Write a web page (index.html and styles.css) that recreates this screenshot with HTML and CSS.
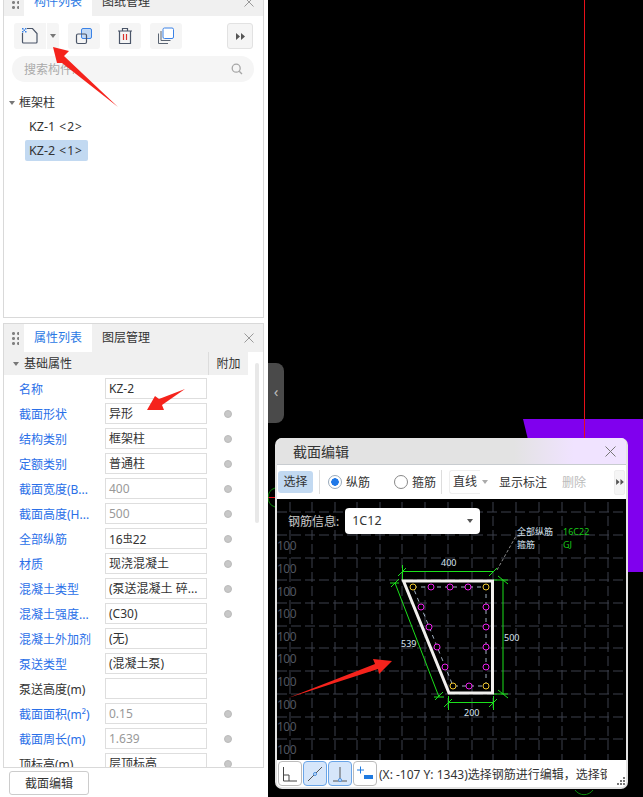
FILE: index.html
```html
<!DOCTYPE html>
<html>

<head>
    <title>截面编辑</title>
    <link rel="stylesheet" href="styles.css">
</head>

<body>
    <div class="app">
        <div class="sidebar">
            <!-- component list -->
            <div class="panel list-panel">
                <div class="tabs">
                    <span class="grip"></span>
                    <span class="tab active">构件列表</span>
                    <span class="tab">图纸管理</span>
                    <svg class="tab-close" width="10" height="10" viewBox="0 0 10 10"><path d="M0.500 0.500L9.500 9.500M9.500 0.500L0.500 9.500" stroke="#999"/></svg>
                </div>
                <div class="tools">
                    <div class="tool tool-new">
                        <svg width="18" height="18" viewBox="0 0 18 18"><path d="M1.500 6V15Q1.500 16 2.500 16H15Q16 16 16 15V6.500L11.500 1.500H6" fill="none" stroke="#4a5568" stroke-width="1.200"/><path d="M1 1h1.500v1.500H1zM4 1h1.500v1.500H4zM2.500 2.500H4V4H2.500zM1 4h1.500v1.500H1zM4 4h1.500v1.500H4z" fill="#3b82e6"/></svg>
                    </div>
                    <div class="tool-drop"><span class="caret"></span></div>
                    <div class="tool">
                        <svg width="18" height="18" viewBox="0 0 18 18"><rect x="6.500" y="1.500" width="10" height="10" rx="1.500" fill="#c2d9f5" stroke="#3b82e6"/><rect x="1.500" y="7" width="10" height="9.500" rx="1.500" fill="none" stroke="#4a5568" stroke-width="1.200"/></svg>
                    </div>
                    <div class="tool">
                        <svg width="16" height="18" viewBox="0 0 16 18"><path d="M1 4H15M5.500 4V1.500H10.500V4M2.500 4V16.500H13.500V4" fill="none" stroke="#4a5568" stroke-width="1.200"/><path d="M6.500 7V13M9.500 7V13" stroke="#d9332b" stroke-width="1.200"/></svg>
                    </div>
                    <div class="tool">
                        <svg width="18" height="18" viewBox="0 0 18 18"><rect x="6" y="1" width="10.500" height="10.500" rx="1.500" fill="#fff" stroke="#3b82e6"/><path d="M4 4V13.500H13.500M1.500 6.500V16.500H11" fill="none" stroke="#5a6472"/></svg>
                    </div>
                    <div class="tool-more">
                        <svg width="9" height="7" viewBox="0 0 9 7"><path d="M0 0L4 3.500L0 7ZM5 0L9 3.500L5 7Z" fill="#555"/></svg>
                    </div>
                </div>
                <div class="search">
                    <span>搜索构件...</span>
                    <svg width="12" height="12" viewBox="0 0 12 12"><circle cx="5.200" cy="5.200" r="4" fill="none" stroke="#a6a6a6" stroke-width="1.300"/><path d="M8.200 8.200L11 11" stroke="#a6a6a6" stroke-width="1.300"/></svg>
                </div>
                <div class="tree">
                    <div class="tree-group"><span class="caret"></span>框架柱</div>
                    <div class="tree-item">KZ-1 <small>&lt;2&gt;</small></div>
                    <div class="tree-item selected">KZ-2 <small>&lt;1&gt;</small></div>
                </div>
            </div>

            <!-- properties -->
            <div class="panel props-panel">
                <div class="tabs">
                    <span class="grip"></span>
                    <span class="tab active">属性列表</span>
                    <span class="tab">图层管理</span>
                    <svg class="tab-close" width="10" height="10" viewBox="0 0 10 10"><path d="M0.500 0.500L9.500 9.500M9.500 0.500L0.500 9.500" stroke="#999"/></svg>
                </div>
                <div class="props-wrap">
                    <div class="props">
                        <div class="props-head">
                            <div class="head-name"><span class="caret"></span>基础属性</div>
                            <div class="head-extra">附加</div>
                        </div>
                        <div class="row"><label>名称</label><div class="field">KZ-2</div><i class="no-dot"></i></div>
                        <div class="row"><label>截面形状</label><div class="field">异形</div><i class="dot"></i></div>
                        <div class="row"><label>结构类别</label><div class="field">框架柱</div><i class="dot"></i></div>
                        <div class="row"><label>定额类别</label><div class="field">普通柱</div><i class="dot"></i></div>
                        <div class="row"><label>截面宽度(B...</label><div class="field muted">400</div><i class="dot"></i></div>
                        <div class="row"><label>截面高度(H...</label><div class="field muted">500</div><i class="dot"></i></div>
                        <div class="row"><label>全部纵筋</label><div class="field">16<span class="steel">虫</span>22</div><i class="dot"></i></div>
                        <div class="row"><label>材质</label><div class="field">现浇混凝土</div><i class="dot"></i></div>
                        <div class="row"><label>混凝土类型</label><div class="field">(泵送混凝土 碎...</div><i class="dot"></i></div>
                        <div class="row"><label>混凝土强度...</label><div class="field">(C30)</div><i class="dot"></i></div>
                        <div class="row"><label>混凝土外加剂</label><div class="field">(无)</div><i class="no-dot"></i></div>
                        <div class="row"><label>泵送类型</label><div class="field">(混凝土泵)</div><i class="no-dot"></i></div>
                        <div class="row"><label class="plain">泵送高度(m)</label><div class="field"></div><i class="no-dot"></i></div>
                        <div class="row"><label>截面面积(m²)</label><div class="field muted">0.15</div><i class="dot"></i></div>
                        <div class="row"><label>截面周长(m)</label><div class="field muted">1.639</div><i class="dot"></i></div>
                        <div class="row"><label class="plain">顶标高(m)</label><div class="field">层顶标高</div><i class="dot"></i></div>
                    </div>
                    <div class="scrollbar"></div>
                </div>
            </div>
            <div class="bottom-bar"><button class="edit-btn">截面编辑</button></div>
        </div>

        <div class="canvas">
            <svg class="scene" width="375" height="797" viewBox="268 0 375 797">
                <polygon points="523,419 643,419 643,572 560,572" fill="#8000ee"/>
                <path d="M584.500 0V440M268 497.500H280" stroke="#e8101a" fill="none"/>
                <path d="M275 488A10 10 0 0 0 275 507M575 790A11 11 0 0 0 593 790" stroke="#0a8a0a" fill="none"/>
            </svg>
            <div class="side-handle"><span>&lsaquo;</span></div>

            <!-- section editor window -->
            <div class="dialog">
                <div class="dialog-title">
                    <span>截面编辑</span>
                    <svg class="dialog-close" width="11" height="11" viewBox="0 0 11 11"><path d="M0.500 0.500L10.500 10.500M10.500 0.500L0.500 10.500" stroke="#777"/></svg>
                </div>
                <div class="dialog-tools">
                    <span class="pick">选择</span>
                    <span class="sep"></span>
                    <span class="radio on"></span><span class="radio-text first">纵筋</span>
                    <span class="radio"></span><span class="radio-text">箍筋</span>
                    <span class="sep second"></span>
                    <span class="line-select">直线</span><span class="caret line-caret"></span>
                    <span class="action">显示标注</span>
                    <span class="action off">删除</span>
                    <span class="tool-more small">
                        <svg width="8" height="6" viewBox="0 0 9 7"><path d="M0 0L4 3.500L0 7ZM5 0L9 3.500L5 7Z" fill="#555"/></svg>
                    </span>
                </div>
                <div class="drawing">
                    <svg width="349" height="261" viewBox="277 499 349 261">
                        <g class="grid">
                            <path d="M290 502V760M312 502V760M335 502V760M357 502V760M380 502V760M402 502V760M425 502V760M448 502V760M472 502V760M493 502V760M516 502V760M539 502V760M562 502V760M585 502V760M608 502V760"/>
                            <path d="M277 512H626M277 535H626M277 558H626M277 580H626M277 603H626M277 626H626M277 648H626M277 671H626M277 694H626M277 717H626M277 739H626"/>
                        </g>
                        <g class="ticks">
                            <text x="277" y="550">100</text><text x="277" y="573">100</text><text x="277" y="596">100</text><text x="277" y="618">100</text><text x="277" y="641">100</text><text x="277" y="663">100</text><text x="277" y="686">100</text><text x="277" y="709">100</text><text x="277" y="731">100</text><text x="277" y="754">100</text>
                        </g>
                        <!-- dimension lines -->
                        <g class="dims">
                            <path d="M402 571.500H493M398 576L406 568M489 576L497 568M402.500 565V580"/>
                            <path d="M503 580V694M498 576L508 584M498 690L508 698M493 580H508M493 694H508"/>
                            <path d="M448 702.500H493M444 707L452 699M489 707L497 699M448.500 696V710M493.500 696V710"/>
                            <path d="M395 583L439 697M390 583H399M391 587L399 579M434 697H444M435 700L443 692"/>
                        </g>
                        <path class="leader" d="M497 570L516 536H522"/>
                        <!-- stirrup and rebar -->
                        <path class="stirrup" d="M413 587H486V686H453Z"/>
                        <g class="bars">
                            <circle cx="431" cy="587" r="3"/><circle cx="450" cy="587" r="3"/><circle cx="468" cy="587" r="3"/>
                            <circle cx="486" cy="607" r="3"/><circle cx="486" cy="627" r="3"/><circle cx="486" cy="647" r="3"/><circle cx="486" cy="667" r="3"/>
                            <circle cx="469" cy="686" r="3"/>
                            <circle cx="421" cy="607" r="3"/><circle cx="429" cy="627" r="3"/><circle cx="437" cy="647" r="3"/><circle cx="445" cy="667" r="3"/>
                        </g>
                        <g class="corners">
                            <circle cx="413" cy="587" r="3"/><circle cx="486" cy="587" r="3"/><circle cx="453" cy="686" r="3"/><circle cx="486" cy="686" r="3"/>
                        </g>
                        <path class="outline" d="M403.500 581H492.500V693H449Z"/>
                        <g class="dim-text">
                            <text x="441" y="566">400</text>
                            <text x="504" y="641">500</text>
                            <text x="464" y="716">200</text>
                            <text x="401" y="647">539</text>
                            <text x="517" y="535">全部纵筋</text>
                            <text x="517" y="548">箍筋</text>
                            <text class="green" x="563" y="535">16C22</text>
                            <text class="green" x="563" y="548">GJ</text>
                        </g>
                    </svg>
                    <div class="rebar-info">
                        <span>钢筋信息:</span>
                        <div class="rebar-select">1C12<span class="caret dark"></span></div>
                    </div>
                </div>
                <div class="dialog-status">
                    <span class="snap">
                        <svg width="20" height="20" viewBox="0 0 20 20"><path d="M3.500 3V17H17M3.500 11H9V17" fill="none" stroke="#444"/></svg>
                    </span>
                    <span class="snap on">
                        <svg width="20" height="20" viewBox="0 0 20 20"><path d="M3 17L17 3" stroke="#555"/><circle cx="10" cy="10" r="1.500" fill="#d6e6fa" stroke="#4a90e2"/></svg>
                    </span>
                    <span class="snap on">
                        <svg width="20" height="20" viewBox="0 0 20 20"><path d="M10 3V16M3 17H17" stroke="#555"/><circle cx="10" cy="16" r="1.500" fill="#d6e6fa" stroke="#4a90e2"/></svg>
                    </span>
                    <span class="snap">
                        <svg width="20" height="20" viewBox="0 0 20 20"><path d="M2 6H9M5.500 2.500V9.500" stroke="#1f7ae0"/><rect x="9" y="11" width="9" height="4" fill="#1f7ae0"/></svg>
                    </span>
                    <span class="status-text">(X: -107 Y: 1343)选择钢筋进行编辑&#65292;选择钢筋后可修改</span>
                    <svg class="resize" width="9" height="9" viewBox="0 0 9 9"><path d="M7 0h2v2H7zM4 3h2v2H4zM7 3h2v2H7zM1 6h2v2H1zM4 6h2v2H4zM7 6h2v2H7z" fill="#777"/></svg>
                </div>
            </div>
        </div>
    </div>

    <!-- red hand-drawn arrows over the screenshot -->
    <svg class="arrows" width="643" height="797" viewBox="0 0 643 797">
        <polygon points="53,47 69,51 64,56 118,107 62,63 57,63"/>
        <polygon points="147,410 155,396 159,399 185,389 162,405 164,410"/>
        <polygon points="288,698 375,664 373,659 392,661 379,674 378,669"/>
    </svg>
</body>

</html>
```

FILE: styles.css
```css
* {
    box-sizing: border-box;
}

html,
body {
    margin: 0;
    height: 100%;
    overflow: hidden;
}

body {
    font-family: "Noto Sans", "Noto Sans CJK SC", sans-serif;
    font-size: 12px;
    color: #333;
    background-color: #000;
}

.app {
    display: flex;
    height: 797px;
}

.sidebar {
    width: 268px;
    height: 797px;
    flex: none;
    background-color: #fff;
    padding: 0 4px 0 3px;
    display: flex;
    flex-direction: column;
    overflow: hidden;
}

.panel {
    border: 1px solid #d9d9d9;
    background-color: #fff;
    overflow: hidden;
}

.list-panel {
    height: 331px;
    margin-top: -13px;
    flex: none;
}

.props-panel {
    height: 445px;
    margin-top: 5px;
    flex: none;
}

.tabs {
    height: 28px;
    background-color: #f0f0f0;
    display: flex;
    align-items: center;
}

.grip {
    width: 8px;
    height: 14px;
    margin: 0 5px 0 7px;
    background-image: radial-gradient(circle, #808080 1.300px, transparent 1.600px);
    background-size: 5px 5px;
}

.tab {
    width: 68px;
    height: 28px;
    line-height: 28px;
    text-align: center;
}

.tab.active {
    background-color: #fff;
    color: #2a78e4;
}

.tab-close {
    margin-left: auto;
    margin-right: 9px;
}

.tools {
    display: flex;
    align-items: center;
    padding: 7px 0 0 10px;
    height: 33px;
}

.tool {
    width: 32px;
    height: 26px;
    background-color: #f5f5f5;
    border-radius: 3px;
    display: flex;
    align-items: center;
    justify-content: center;
    margin-right: 9px;
}

.tool-new {
    margin-right: 1px;
    border-radius: 3px 0 0 3px;
}

.tool-drop {
    width: 12px;
    height: 26px;
    background-color: #f5f5f5;
    border-radius: 0 3px 3px 0;
    margin-right: 9px;
    display: flex;
    align-items: center;
    justify-content: center;
}

.caret {
    display: inline-block;
    flex: none;
    width: 0;
    height: 0;
    border-left: 3px solid transparent;
    border-right: 3px solid transparent;
    border-top: 4px solid #777;
}

.caret.dark {
    border-top-color: #555;
}

.tool-more {
    width: 26px;
    height: 26px;
    margin-left: 36px;
    background-color: #f5f5f5;
    border: 1px solid #e2e2e2;
    border-radius: 3px;
    display: flex;
    align-items: center;
    justify-content: center;
}

.search {
    margin: 7px 9px 0 8px;
    height: 26px;
    background-color: #f5f5f5;
    border-radius: 13px;
    padding: 0 11px 0 12px;
    display: flex;
    align-items: center;
    justify-content: space-between;
    color: #aaa;
}

.search span {
    width: 50px;
    overflow: hidden;
    white-space: nowrap;
}

.tree {
    padding: 9px 0 0 5px;
}

.tree-group {
    height: 24px;
    line-height: 24px;
    display: flex;
    align-items: center;
    gap: 4px;
}

.tree-item {
    margin-left: 16px;
    width: 63px;
    height: 22px;
    line-height: 22px;
    padding-left: 4px;
    border-radius: 2px;
    margin-top: 1px;
    font-size: 12.500px;
}

.tree-item small {
    font-size: 12px;
    letter-spacing: 1px;
    margin-left: 1px;
}

.tree-item.selected {
    background-color: #c2d9f1;
    height: 21px;
    line-height: 21px;
    margin-top: 2px;
}

.props-wrap {
    display: flex;
}

.props {
    width: 244px;
    flex: none;
}

.props-head {
    display: flex;
    height: 23px;
    background-color: #f0f0f0;
}

.head-name {
    width: 204px;
    padding-left: 9px;
    line-height: 23px;
    display: flex;
    align-items: center;
    gap: 5px;
}

.head-extra {
    flex: 1;
    border-left: 1px solid #dcdcdc;
    text-align: center;
    line-height: 23px;
}

.row {
    height: 24px;
    margin-bottom: 1px;
    display: flex;
    align-items: center;
    padding-top: 3px;
}

.row label {
    width: 101px;
    padding-left: 15px;
    color: #2a6fe8;
    white-space: nowrap;
}

.row label.plain {
    color: #333;
}

.field {
    width: 102px;
    height: 21px;
    border: 1px solid #dedede;
    padding: 0 3px;
    line-height: 19px;
    white-space: nowrap;
    overflow: hidden;
}

.field.muted {
    color: #999;
}

.steel {
    font-size: 10px;
    vertical-align: 2px;
}

.dot {
    width: 8px;
    height: 8px;
    margin-left: 17px;
    border-radius: 50%;
    background-color: #c8c8c8;
    border: 1px solid #bbb;
}

.no-dot {
    display: block;
    width: 8px;
}

.scrollbar {
    width: 4px;
    height: 160px;
    margin: 11px 0 0 7px;
    background-color: #e8e8e8;
    border-radius: 2px;
}

.bottom-bar {
    padding: 3px 0 0 6px;
}

.edit-btn {
    width: 80px;
    height: 24px;
    padding: 0;
    border: 1px solid #ccc;
    border-radius: 3px;
    background-color: #fff;
    color: #333;
    font: inherit;
}

.canvas {
    position: relative;
    flex: 1;
    background-color: #000;
    overflow: hidden;
}

.scene {
    position: absolute;
    left: 0;
    top: 0;
}

.side-handle {
    position: absolute;
    left: 0;
    top: 363px;
    width: 16px;
    height: 60px;
    background-color: #4a4a4a;
    border-radius: 0 8px 8px 0;
    color: #bbb;
    font-size: 15px;
    text-align: center;
    line-height: 56px;
}

.dialog {
    position: absolute;
    left: 7px;
    top: 438px;
    width: 353px;
    height: 351px;
    background-color: #fff;
    border-radius: 7px;
    border: 2px solid #e3e3e3;
    border-top: none;
    overflow: hidden;
}

.dialog-title {
    height: 26px;
    background: linear-gradient(90deg, #e3e3e3 0%, #e3e3e3 68%, #f0e3ff 85%);
    padding-left: 16px;
    display: flex;
    align-items: center;
    justify-content: space-between;
    font-size: 14px;
}

.dialog-close {
    margin-right: 10px;
}

.dialog-tools {
    height: 35px;
    border-top: 1px solid #c8ccd0;
    display: flex;
    align-items: center;
    background-color: #fff;
    padding-left: 1px;
    white-space: nowrap;
}

.dialog-tools > span {
    flex: none;
}

.pick {
    width: 35px;
    height: 22px;
    line-height: 22px;
    text-align: center;
    background-color: #c2d9f1;
    border-radius: 3px;
}

.sep {
    width: 1px;
    height: 24px;
    background-color: #ddd;
    margin: 0 8px 0 6px;
}

.sep.second {
    margin: 0 7px 0 5px;
}

.radio {
    width: 14px;
    height: 14px;
    border-radius: 50%;
    border: 1px solid #888;
    background-color: #fff;
}

.radio.on {
    border-color: #9ab;
    background: radial-gradient(circle, #1f78e8 0 3.500px, #fff 4px);
}

.radio-text {
    margin-left: 4px;
}

.radio-text.first {
    margin-right: 24px;
}

.line-select {
    width: 31px;
    height: 24px;
    line-height: 22px;
    padding-left: 3px;
    border: 1px solid #eee;
    border-right: none;
    border-radius: 3px 0 0 3px;
}

.line-caret {
    margin-left: 2px;
    border-top-color: #aaa;
}

.action {
    margin-left: 11px;
}

.action.off {
    color: #bbb;
    margin-left: 15px;
}

.tool-more.small {
    width: 11px;
    height: 25px;
    margin-left: 28px;
    border-radius: 2px;
    border-color: #eee;
    overflow: hidden;
}

.tool-more.small svg {
    flex: none;
}

.drawing {
    position: relative;
    height: 261px;
    background-color: #000;
}

.drawing svg {
    display: block;
}

.grid path {
    fill: none;
    stroke: #3c414d;
    stroke-dasharray: 10 4;
}

.ticks text {
    fill: #50555f;
    font-size: 12px;
    letter-spacing: -0.500px;
}

.dims path {
    fill: none;
    stroke: #1be01b;
}

.leader {
    fill: none;
    stroke: #888;
    stroke-dasharray: 3 2;
}

.stirrup {
    fill: none;
    stroke: #c5d8ee;
    stroke-width: 0.800;
    stroke-dasharray: 4 4;
}

.bars circle {
    fill: #000;
    stroke: #ee20ee;
}

.corners circle {
    fill: #000;
    stroke: #f0c830;
}

.outline {
    fill: none;
    stroke: #f2f0ee;
    stroke-width: 3;
}

.dim-text text {
    fill: #d8e4f0;
    font-size: 9px;
}

.dim-text text.green {
    fill: #18c818;
}

.rebar-info {
    position: absolute;
    left: 11px;
    top: 9px;
    display: flex;
    align-items: center;
    gap: 6px;
    color: #ccc;
}

.rebar-select {
    width: 135px;
    height: 26px;
    line-height: 26px;
    padding: 0 7px;
    background-color: #fff;
    border-radius: 4px;
    color: #333;
    font-size: 12.500px;
    display: flex;
    align-items: center;
    justify-content: space-between;
}

.dialog-status {
    position: relative;
    height: 27px;
    display: flex;
    align-items: center;
    padding-left: 1px;
    background-color: #fff;
}

.snap {
    width: 24px;
    height: 25px;
    flex: none;
    margin-right: 1px;
    border: 1px solid #bbb;
    border-radius: 4px;
    display: flex;
    align-items: center;
    justify-content: center;
}

.snap.on {
    background-color: #d6e6fa;
    border-color: #6aa5e8;
}

.status-text {
    width: 228px;
    margin-left: 1px;
    overflow: hidden;
    white-space: nowrap;
}

.resize {
    position: absolute;
    right: 1px;
    bottom: 1px;
}

.arrows {
    position: absolute;
    left: 0;
    top: 0;
    pointer-events: none;
}

.arrows polygon {
    fill: #f5231c;
}
```
